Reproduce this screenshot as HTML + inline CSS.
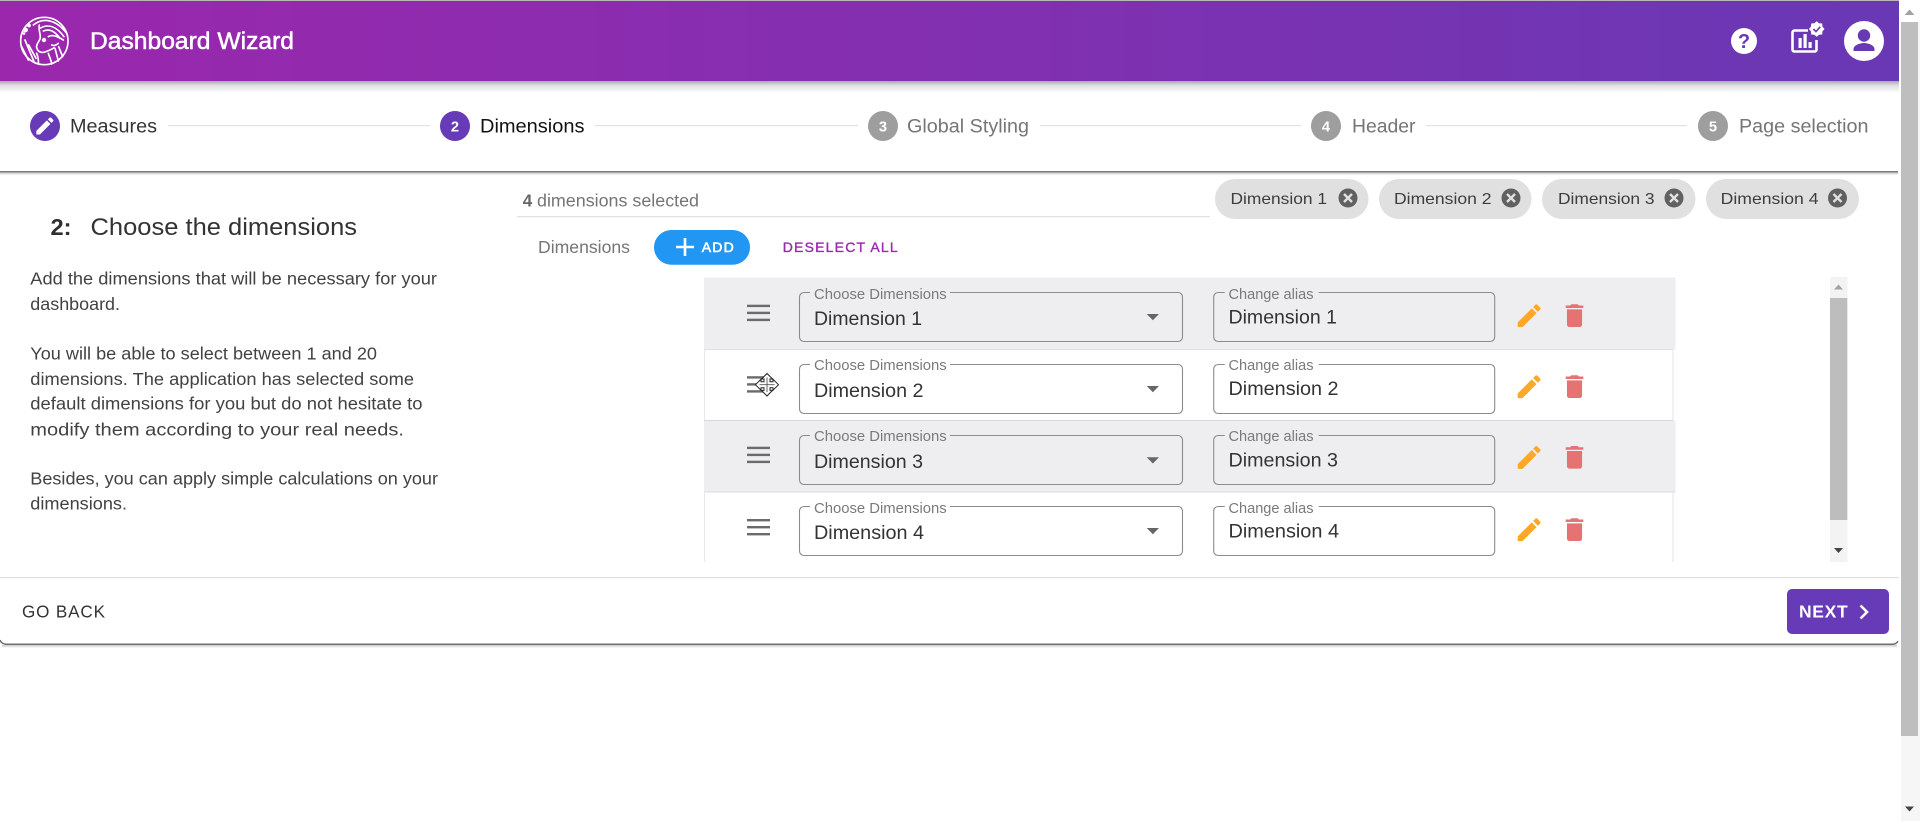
<!DOCTYPE html>
<html lang="en">
<head>
<meta charset="utf-8">
<title>Dashboard Wizard</title>
<style>
html,body{margin:0;padding:0;width:1920px;height:821px;overflow:hidden;background:#fff}
svg{display:block}
text{font-family:"Liberation Sans",sans-serif}
</style>
</head>
<body>
<svg xmlns="http://www.w3.org/2000/svg" width="1920" height="821" viewBox="0 0 1920 821">
<defs>
<linearGradient id="bar" x1="0" y1="0" x2="1" y2="0"><stop offset="0" stop-color="#9b27ad"/><stop offset="1" stop-color="#6938b4"/></linearGradient>
<linearGradient id="sh" x1="0" y1="0" x2="0" y2="1"><stop offset="0" stop-color="#a8a8a8"/><stop offset=".35" stop-color="#dedede"/><stop offset="1" stop-color="#fff"/></linearGradient>
<linearGradient id="sh2" x1="0" y1="0" x2="0" y2="1"><stop offset="0" stop-color="#c9c9c9"/><stop offset="1" stop-color="#fff"/></linearGradient>
<path id="pen" d="M3 17.25V21h3.75L17.81 9.94l-3.75-3.75L3 17.25zM20.71 7.04c.39-.39.39-1.02 0-1.41l-2.34-2.34c-.39-.39-1.02-.39-1.41 0l-1.83 1.83 3.75 3.75 1.83-1.83z"/>
<path id="del" d="M6 19c0 1.1.9 2 2 2h8c1.1 0 2-.9 2-2V7H6v12zM19 4h-3.5l-1-1h-5l-1 1H5v2h14V4z"/>
<g id="chipx"><circle r="9.5" fill="#616161"/><path d="M-4-4L4 4M4-4L-4 4" stroke="#e0e0e0" stroke-width="2.4" fill="none"/></g>
<g id="burger" fill="#6b6b6b"><rect x="747" y="0" width="23" height="2.4"/><rect x="747" y="7" width="23" height="2.4"/><rect x="747" y="14" width="23" height="2.4"/></g>
</defs>

<rect width="1920" height="821" fill="#fff"/>

<!-- top bar -->
<rect x="0" y="0" width="1899" height="1" fill="#b8b8b8"/>
<rect x="0" y="81" width="1899" height="12" fill="url(#sh)"/>
<rect x="0" y="1" width="1899" height="80" fill="url(#bar)"/>

<!-- logo -->
<g transform="translate(10 5) scale(.3333)" fill="none" stroke="#fff" stroke-width="5" stroke-linecap="round" stroke-linejoin="round">
<circle cx="103" cy="108" r="71"/>
<path d="M88 60C84 75 94 90 90 102 86 112 78 118 80 127 82 140 95 146 108 140 118 136 128 132 132 128"/>
<path d="M80 145C84 155 86 166 85 177M115 145C118 156 124 166 125 177"/>
<path d="M70 60C100 35 140 45 170 85M90 70C115 55 140 65 162 95M100 78C120 70 135 80 150 100M115 95C125 88 140 92 160 105"/>
<path d="M125 120c8 3 15 0 20-5"/>
<path d="M45 105L72 170M56 120L78 160M35 125L55 165"/>
<path d="M135 130L145 168M146 125L158 155"/>
</g>
<circle cx="44" cy="40" r="2.200" fill="#fff"/>
<circle cx="25.500" cy="30" r="2.400" fill="#fff"/><circle cx="29" cy="25.500" r="1.900" fill="#fff"/><circle cx="24" cy="33.500" r="1.300" fill="#fff"/>

<text x="90" y="49" font-size="24" fill="#fff" stroke="#fff" stroke-width=".5" textLength="204" lengthAdjust="spacingAndGlyphs">Dashboard Wizard</text>

<!-- header icons -->
<circle cx="1744" cy="41" r="13" fill="#fff"/>
<text x="1744" y="48" font-size="20" font-weight="700" fill="#6938b4" text-anchor="middle">?</text>
<path d="M1808 30.500h-13.500a2 2 0 0 0-2 2v17a2 2 0 0 0 2 2h20a2 2 0 0 0 2-2v-9.500" fill="none" stroke="#fff" stroke-width="2.600"/>
<rect x="1798.500" y="38" width="3.200" height="10" fill="#fff"/><rect x="1803.500" y="34" width="3.200" height="14" fill="#fff"/><rect x="1808.500" y="42" width="3.200" height="6" fill="#fff"/>
<path transform="translate(1816.700 29)" d="M0-7.800L2.370-5.730 5.520-5.520 5.730-2.370 7.800 0 5.730 2.370 5.520 5.520 2.370 5.730 0 7.800-2.370 5.730-5.520 5.520-5.730 2.370-7.800 0-5.730-2.370-5.520-5.520-2.370-5.730z" fill="#fff"/>
<path d="M1813.400 29l2.600 2.600 4.200-4.800" fill="none" stroke="#6938b4" stroke-width="1.600"/>
<circle cx="1864" cy="41" r="20" fill="#fff"/>
<circle cx="1864" cy="35.500" r="6.200" fill="#6938b4"/>
<path d="M1853.500 51v-2c0-4 7-6 10.500-6s10.500 2 10.500 6v2z" fill="#6938b4"/>

<!-- stepper -->
<rect x="168" y="125" width="262" height="1.200" fill="#e2e2e2"/>
<rect x="595" y="125" width="263" height="1.200" fill="#e2e2e2"/>
<rect x="1040" y="125" width="261" height="1.200" fill="#e2e2e2"/>
<rect x="1426" y="125" width="261" height="1.200" fill="#e2e2e2"/>
<circle cx="45" cy="126" r="15" fill="#673ab7"/>
<use href="#pen" fill="#fff" transform="translate(33.500 114.500) scale(.95)"/>
<text x="70" y="132.700" font-size="19.600" fill="#333" textLength="87" lengthAdjust="spacingAndGlyphs">Measures</text>
<circle cx="455" cy="126" r="15" fill="#673ab7"/>
<text x="455" y="131.500" font-size="14.700" font-weight="700" fill="#fff" text-anchor="middle">2</text>
<text x="480" y="132.700" font-size="19.600" fill="#111" textLength="104.500" lengthAdjust="spacingAndGlyphs">Dimensions</text>
<circle cx="883" cy="126" r="15" fill="#9e9e9e"/>
<text x="883" y="131.500" font-size="14.700" font-weight="700" fill="#fff" text-anchor="middle">3</text>
<text x="907" y="132.700" font-size="19.600" fill="#757575" textLength="122" lengthAdjust="spacingAndGlyphs">Global Styling</text>
<circle cx="1326" cy="126" r="15" fill="#9e9e9e"/>
<text x="1326" y="131.500" font-size="14.700" font-weight="700" fill="#fff" text-anchor="middle">4</text>
<text x="1352" y="132.700" font-size="19.600" fill="#757575" textLength="63.500" lengthAdjust="spacingAndGlyphs">Header</text>
<circle cx="1713" cy="126" r="15" fill="#9e9e9e"/>
<text x="1713" y="131.500" font-size="14.700" font-weight="700" fill="#fff" text-anchor="middle">5</text>
<text x="1739" y="132.700" font-size="19.600" fill="#757575" textLength="129.500" lengthAdjust="spacingAndGlyphs">Page selection</text>

<rect x="0" y="171" width="1898" height="1.500" fill="#7c7c7c"/>
<rect x="0" y="172.500" width="1898" height="3" fill="url(#sh2)"/>

<!-- left panel -->
<text x="50.500" y="235" font-size="23" font-weight="700" fill="#2f2f2f" textLength="21" lengthAdjust="spacingAndGlyphs">2:</text>
<text x="90.500" y="235" font-size="24.500" fill="#333" textLength="266.500" lengthAdjust="spacingAndGlyphs">Choose the dimensions</text>
<g font-size="17.100" fill="#424242">
<text x="30.300" y="284.500" textLength="406.700" lengthAdjust="spacingAndGlyphs">Add the dimensions that will be necessary for your</text>
<text x="30.300" y="310" textLength="89.700" lengthAdjust="spacingAndGlyphs">dashboard.</text>
<text x="30.300" y="359.300" textLength="346.700" lengthAdjust="spacingAndGlyphs">You will be able to select between 1 and 20</text>
<text x="30.300" y="384.800" textLength="383.700" lengthAdjust="spacingAndGlyphs">dimensions. The application has selected some</text>
<text x="30.300" y="409.500" textLength="392.200" lengthAdjust="spacingAndGlyphs">default dimensions for you but do not hesitate to</text>
<text x="30.300" y="435.300" textLength="373.700" lengthAdjust="spacingAndGlyphs">modify them according to your real needs.</text>
<text x="30.300" y="484.300" textLength="407.700" lengthAdjust="spacingAndGlyphs">Besides, you can apply simple calculations on your</text>
<text x="30.300" y="509.500" textLength="96.700" lengthAdjust="spacingAndGlyphs">dimensions.</text>
</g>

<!-- selected row -->
<text x="522.700" y="206.500" font-size="17.100" font-weight="700" fill="#666" textLength="9.500" lengthAdjust="spacingAndGlyphs">4</text>
<text x="537" y="206.500" font-size="17.100" fill="#757575" textLength="162" lengthAdjust="spacingAndGlyphs">dimensions selected</text>
<rect x="517" y="216" width="693" height="1.200" fill="#e2e2e2"/>

<g fill="#e0e0e0">
<rect x="1215" y="179" width="153.500" height="40" rx="20"/>
<rect x="1379" y="179" width="152.500" height="40" rx="20"/>
<rect x="1542" y="179" width="153.500" height="40" rx="20"/>
<rect x="1706" y="179" width="153" height="40" rx="20"/>
</g>
<g font-size="15.900" fill="#3d3d3d">
<text x="1230.500" y="204" textLength="96.500" lengthAdjust="spacingAndGlyphs">Dimension 1</text>
<text x="1394" y="204" textLength="97.500" lengthAdjust="spacingAndGlyphs">Dimension 2</text>
<text x="1558" y="204" textLength="96.500" lengthAdjust="spacingAndGlyphs">Dimension 3</text>
<text x="1720.700" y="204" textLength="97.800" lengthAdjust="spacingAndGlyphs">Dimension 4</text>
</g>
<use href="#chipx" x="1348" y="198"/><use href="#chipx" x="1511" y="198"/><use href="#chipx" x="1674" y="198"/><use href="#chipx" x="1837.500" y="198"/>

<text x="538" y="253" font-size="17.100" fill="#757575" textLength="92" lengthAdjust="spacingAndGlyphs">Dimensions</text>
<rect x="654" y="230" width="96" height="34.700" rx="17.300" fill="#2196f3"/>
<path d="M685 238v18M676 247h18" stroke="#fff" stroke-width="2.600" fill="none"/>
<text x="701.700" y="252" font-size="14" fill="#fff" stroke="#fff" stroke-width=".6" textLength="32" lengthAdjust="spacing">ADD</text>
<text x="782.700" y="252" font-size="14" fill="#9c27b0" stroke="#9c27b0" stroke-width=".35" textLength="115" lengthAdjust="spacing">DESELECT ALL</text>

<!-- list rows -->
<rect x="704" y="277.500" width="971.500" height="72" fill="#eeeef0"/>
<rect x="704" y="420.500" width="971.500" height="71" fill="#eeeef0"/>
<rect x="704" y="349" width="969" height="1" fill="#e0e0e0"/>
<rect x="704" y="420" width="969" height="1" fill="#d8d8d8"/>
<rect x="704" y="491.500" width="971.500" height="1" fill="#dcdcdc"/>
<rect x="704" y="350" width="1" height="70" fill="#e8e8e8"/>
<rect x="704" y="492" width="1" height="70" fill="#e8e8e8"/>
<rect x="1672.500" y="350" width="1" height="70" fill="#e4e4e4"/>
<rect x="1672.500" y="492" width="1" height="70" fill="#e4e4e4"/>

<use href="#burger" y="304.700"/><use href="#burger" y="376.200"/><use href="#burger" y="446.700"/><use href="#burger" y="519"/>

<!-- move cursor -->
<path d="M767 373.500L772.500 379H770V381.700H773V379.200L778.500 384.700 773 390.200V387.700H770V390.400H772.500L767 396 761.500 390.400H764V387.700H761V390.200L755.500 384.700 761 379.200V381.700H764V379H761.500z" fill="#fff" stroke="#222" stroke-width="1"/>
<path d="M767 377.500v14.500M759.500 384.700h15" stroke="#555" stroke-width=".9" fill="none"/>

<!-- select boxes -->
<g fill="none" stroke="#8b8b8b" stroke-width="1.100">
<path d="M810 292.500h-6a4.500 4.500 0 0 0-4.500 4.500v40a4.500 4.500 0 0 0 4.500 4.500h374a4.500 4.500 0 0 0 4.500-4.500v-40a4.500 4.500 0 0 0-4.500-4.500H950"/>
<path d="M810 364.500h-6a4.500 4.500 0 0 0-4.500 4.500v40a4.500 4.500 0 0 0 4.500 4.500h374a4.500 4.500 0 0 0 4.500-4.500v-40a4.500 4.500 0 0 0-4.500-4.500H950"/>
<path d="M810 435.500h-6a4.500 4.500 0 0 0-4.500 4.500v40a4.500 4.500 0 0 0 4.500 4.500h374a4.500 4.500 0 0 0 4.500-4.500v-40a4.500 4.500 0 0 0-4.500-4.500H950"/>
<path d="M810 506.500h-6a4.500 4.500 0 0 0-4.500 4.500v40a4.500 4.500 0 0 0 4.500 4.500h374a4.500 4.500 0 0 0 4.500-4.500v-40a4.500 4.500 0 0 0-4.500-4.500H950"/>
<g transform="translate(.7 0)">
<path d="M1224 292.500h-6.500a4.500 4.500 0 0 0-4.500 4.500v40a4.500 4.500 0 0 0 4.500 4.500h272a4.500 4.500 0 0 0 4.500-4.500v-40a4.500 4.500 0 0 0-4.500-4.500H1318"/>
<path d="M1224 364.500h-6.500a4.500 4.500 0 0 0-4.500 4.500v40a4.500 4.500 0 0 0 4.500 4.500h272a4.500 4.500 0 0 0 4.500-4.500v-40a4.500 4.500 0 0 0-4.500-4.500H1318"/>
<path d="M1224 435.500h-6.500a4.500 4.500 0 0 0-4.500 4.500v40a4.500 4.500 0 0 0 4.500 4.500h272a4.500 4.500 0 0 0 4.500-4.500v-40a4.500 4.500 0 0 0-4.500-4.500H1318"/>
<path d="M1224 506.500h-6.500a4.500 4.500 0 0 0-4.500 4.500v40a4.500 4.500 0 0 0 4.500 4.500h272a4.500 4.500 0 0 0 4.500-4.500v-40a4.500 4.500 0 0 0-4.500-4.500H1318"/>
</g>
</g>
<g font-size="14.700" fill="#7a7a7a">
<text x="814" y="299" textLength="132.700" lengthAdjust="spacingAndGlyphs">Choose Dimensions</text>
<text x="814" y="370" textLength="132.700" lengthAdjust="spacingAndGlyphs">Choose Dimensions</text>
<text x="814" y="441" textLength="132.700" lengthAdjust="spacingAndGlyphs">Choose Dimensions</text>
<text x="814" y="513" textLength="132.700" lengthAdjust="spacingAndGlyphs">Choose Dimensions</text>
<text x="1228.500" y="299" textLength="85" lengthAdjust="spacingAndGlyphs">Change alias</text>
<text x="1228.500" y="370" textLength="85" lengthAdjust="spacingAndGlyphs">Change alias</text>
<text x="1228.500" y="441" textLength="85" lengthAdjust="spacingAndGlyphs">Change alias</text>
<text x="1228.500" y="513" textLength="85" lengthAdjust="spacingAndGlyphs">Change alias</text>
</g>
<g font-size="19.600" fill="#333">
<text x="814" y="325" textLength="108" lengthAdjust="spacingAndGlyphs">Dimension 1</text>
<text x="814" y="397" textLength="109.500" lengthAdjust="spacingAndGlyphs">Dimension 2</text>
<text x="814" y="468" textLength="109" lengthAdjust="spacingAndGlyphs">Dimension 3</text>
<text x="814" y="539" textLength="110" lengthAdjust="spacingAndGlyphs">Dimension 4</text>
<text x="1228.500" y="323.700" textLength="108.500" lengthAdjust="spacingAndGlyphs">Dimension 1</text>
<text x="1228.500" y="395" textLength="110" lengthAdjust="spacingAndGlyphs">Dimension 2</text>
<text x="1228.500" y="466.500" textLength="109.500" lengthAdjust="spacingAndGlyphs">Dimension 3</text>
<text x="1228.500" y="537.500" textLength="110.500" lengthAdjust="spacingAndGlyphs">Dimension 4</text>
</g>
<g fill="#666">
<path d="M1146.700 314h12.300l-6.150 6.200z"/>
<path d="M1146.700 386h12.300l-6.150 6.200z"/>
<path d="M1146.700 457.300h12.300l-6.150 6.200z"/>
<path d="M1146.700 528h12.300l-6.150 6.200z"/>
</g>

<!-- row actions -->
<g fill="#ffa726">
<use href="#pen" transform="translate(1513.900 300.500) scale(1.270)"/>
<use href="#pen" transform="translate(1513.900 371.500) scale(1.270)"/>
<use href="#pen" transform="translate(1513.900 442.200) scale(1.270)"/>
<use href="#pen" transform="translate(1513.900 514.500) scale(1.270)"/>
</g>
<g fill="#e57373">
<use href="#del" transform="translate(1559.400 300.500) scale(1.260)"/>
<use href="#del" transform="translate(1559.400 371.500) scale(1.260)"/>
<use href="#del" transform="translate(1559.400 442.200) scale(1.260)"/>
<use href="#del" transform="translate(1559.400 514.500) scale(1.260)"/>
</g>

<!-- inner scrollbar -->
<rect x="1830" y="277" width="17.500" height="285" fill="#f3f3f3"/>
<rect x="1830" y="298" width="17.300" height="222" fill="#bdbdbd"/>
<path d="M1838.500 284.500l4.500 5h-9z" fill="#a3a3a3"/>
<path d="M1834 548h9l-4.500 5z" fill="#444"/>

<!-- footer -->
<rect x="0" y="577" width="1899" height="1.200" fill="#e0e0e0"/>
<text x="22" y="617.500" font-size="17.100" fill="#333" textLength="83" lengthAdjust="spacing">GO BACK</text>
<rect x="1787" y="589" width="102" height="45" rx="5" fill="#673ab7"/>
<text x="1799" y="617.700" font-size="17.500" font-weight="700" fill="#fff" textLength="48.700" lengthAdjust="spacing">NEXT</text>
<path d="M1860.500 605.500l6.500 6.500-6.500 6.500" fill="none" stroke="#fff" stroke-width="2.600"/>

<!-- card bottom -->
<path d="M0 640c1 3 3 4 6 4.200H1893c2.500 0 4-1.500 5-3" fill="none" stroke="#6f6f6f" stroke-width="1.500"/>
<rect x="2" y="645" width="1895" height="3" fill="url(#sh2)"/>

<!-- page scrollbar -->
<rect x="1901" y="0" width="19" height="821" fill="#f6f6f6"/>
<rect x="1901" y="0" width="19" height="22" fill="#fff"/>
<rect x="1901" y="22" width="17" height="714" fill="#bebebe"/>
<path d="M1909.500 9.500l5 5.500h-10z" fill="#a3a3a3"/>
<path d="M1905 806.500h9l-4.500 5z" fill="#444"/>
</svg>
</body>
</html>
